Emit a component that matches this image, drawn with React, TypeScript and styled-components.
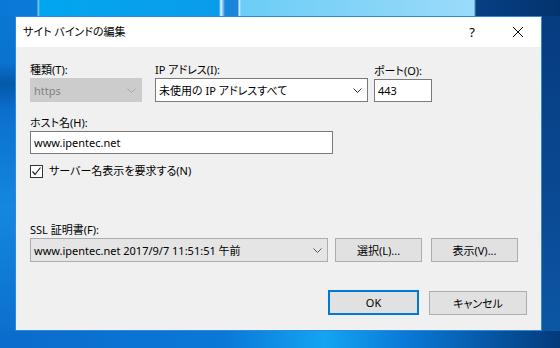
import React from "react";
import styled, { createGlobalStyle } from "styled-components";

const Global = createGlobalStyle`
  html, body { margin: 0; padding: 0; }
  body {
    width: 560px;
    height: 348px;
    overflow: hidden;
    font-family: "Noto Sans", "Noto Sans CJK JP", sans-serif;
    font-feature-settings: "palt";
  }
  * { box-sizing: border-box; }
`;

const Desktop = styled.div`
  width: 560px;
  height: 348px;
  padding: 16px 0 0 15px;
  background-color: #0a6fcf;
  background-image:
    linear-gradient(to right, #0a78d6 0px, #0a7ad8 37px, #7fd0f8 38px, #02a6f0 40px, #0a9ceb 219px, #e0f4ff 221px, #1a86da 225px, #1a86da 238px, #dff3ff 239px, #6ccdf6 241px, #9adbfa 474px, #063f82 476px, #03336f 560px),
    linear-gradient(to right, #0a6ccc 0%, #0a78d8 40%, #14a4f2 58%, #0a7ad8 72%, #043a7a 100%),
    linear-gradient(to bottom, #063a7e 0%, #0a4a94 60%, #0d58a6 100%),
    linear-gradient(to bottom, #0a78d6 0%, #0a72d0 18%, #0558a8 24%, #0a70ce 32%, #1587de 60%, #0a6ccc 100%);
  background-repeat: no-repeat;
  background-size: 100% 16px, 100% 17px, 18px 100%, 15px 100%;
  background-position: top left, bottom left, top right, top left;
`;

const Dialog = styled.div`
  width: 527px;
  height: 315px;
  border: 1px solid #2b8ae0;
  background: #f0f0f0;
  display: flex;
  flex-direction: column;
  color: #000;
  font-size: 11px;
`;

const TitleBar = styled.div`
  height: 30px;
  background: #fff;
  display: flex;
  align-items: center;
  padding-left: 7px;
`;

const Title = styled.div`
  flex: 1;
  font-size: 11px;
  line-height: 16px;
`;

const CaptionButton = styled.div`
  width: 46px;
  height: 30px;
  display: flex;
  align-items: center;
  justify-content: center;
  font-size: 13px;
  color: #000;
`;

const Body = styled.div`
  flex: 1;
  padding: 15px 14px 0 14px;
  display: flex;
  flex-direction: column;
`;

const Row = styled.div<{ $mt?: number; $end?: boolean }>`
  display: flex;
  align-items: flex-end;
  margin-top: ${(p) => p.$mt ?? 0}px;
  justify-content: ${(p) => (p.$end ? "flex-end" : "flex-start")};
`;

const Field = styled.div<{ $w: number; $mr?: number }>`
  width: ${(p) => p.$w}px;
  margin-right: ${(p) => p.$mr ?? 0}px;
  display: flex;
  flex-direction: column;
`;

const Label = styled.div`
  height: 16px;
  line-height: 16px;
  font-size: 11px;
  white-space: nowrap;
`;

const Combo = styled.div<{ $variant: "disabled" | "normal" | "readonly" }>`
  height: 24px;
  display: flex;
  align-items: center;
  padding: 0 5px 0 3px;
  font-size: 11px;
  white-space: nowrap;
  background: ${(p) =>
    p.$variant === "disabled" ? "#cccccc" : p.$variant === "readonly" ? "#e5e5e5" : "#ffffff"};
  border: 1px solid
    ${(p) =>
      p.$variant === "disabled" ? "#cccccc" : p.$variant === "readonly" ? "#adadad" : "#7a7a7a"};
  color: ${(p) => (p.$variant === "disabled" ? "#838383" : "#000")};
`;

const ComboText = styled.span`
  flex: 1;
  overflow: hidden;
`;

const TextBox = styled.div<{ $h?: number }>`
  height: ${(p) => p.$h ?? 23}px;
  display: flex;
  align-items: center;
  padding: 0 3px;
  background: #fff;
  border: 1px solid #7a7a7a;
  font-size: 11px;
  white-space: nowrap;
`;

const CheckRow = styled.div`
  display: flex;
  align-items: center;
  margin-top: 10px;
  height: 14px;
`;

const CheckBox = styled.div`
  width: 13px;
  height: 13px;
  border: 1px solid #333;
  background: #fff;
  display: flex;
  align-items: center;
  justify-content: center;
  margin-right: 6px;
`;

const CheckLabel = styled.span`
  font-size: 11px;
  line-height: 16px;
`;

const Button = styled.div<{ $w: number; $ml?: number; $default?: boolean }>`
  width: ${(p) => p.$w}px;
  height: ${(p) => (p.$default ? 25 : 24)}px;
  margin-left: ${(p) => p.$ml ?? 0}px;
  display: flex;
  align-items: center;
  justify-content: center;
  background: #e1e1e1;
  border: ${(p) => (p.$default ? "2px solid #0078d7" : "1px solid #adadad")};
  font-size: 11px;
  white-space: nowrap;
`;

const Chevron = ({ color }: { color: string }) => (
  <svg width="9" height="5" viewBox="0 0 9 5">
    <path d="M0.5 0.5 L4.5 4.5 L8.5 0.5" fill="none" stroke={color} strokeWidth="1" />
  </svg>
);

const CloseIcon = () => (
  <svg width="10" height="10" viewBox="0 0 10 10">
    <path d="M0 0 L10 10 M10 0 L0 10" stroke="#000" strokeWidth="1" />
  </svg>
);

const CheckMark = () => (
  <svg width="11" height="11" viewBox="0 0 11 11">
    <path d="M1.5 5.5 L4 8.5 L9.5 1.5" fill="none" stroke="#222" strokeWidth="1.2" />
  </svg>
);

export default function App() {
  return (
    <>
      <Global />
      <Desktop>
        <Dialog>
          <TitleBar>
            <Title>サイト バインドの編集</Title>
            <CaptionButton>?</CaptionButton>
            <CaptionButton>
              <CloseIcon />
            </CaptionButton>
          </TitleBar>
          <Body>
            <Row>
              <Field $w={112} $mr={13}>
                <Label>種類(T):</Label>
                <Combo $variant="disabled">
                  <ComboText>https</ComboText>
                  <Chevron color="#a6a6a6" />
                </Combo>
              </Field>
              <Field $w={213} $mr={6}>
                <Label>IP アドレス(I):</Label>
                <Combo $variant="normal">
                  <ComboText>未使用の IP アドレスすべて</ComboText>
                  <Chevron color="#333" />
                </Combo>
              </Field>
              <Field $w={58}>
                <Label>ポート(O):</Label>
                <TextBox>443</TextBox>
              </Field>
            </Row>
            <Row $mt={13}>
              <Field $w={303}>
                <Label>ホスト名(H):</Label>
                <TextBox>www.ipentec.net</TextBox>
              </Field>
            </Row>
            <CheckRow>
              <CheckBox>
                <CheckMark />
              </CheckBox>
              <CheckLabel>サーバー名表示を要求する(N)</CheckLabel>
            </CheckRow>
            <Row $mt={44}>
              <Field $w={298}>
                <Label>SSL 証明書(F):</Label>
                <Combo $variant="readonly">
                  <ComboText>www.ipentec.net 2017/9/7 11:51:51 午前</ComboText>
                  <Chevron color="#555" />
                </Combo>
              </Field>
              <Button $w={87} $ml={7}>選択(L)...</Button>
              <Button $w={87} $ml={9}>表示(V)...</Button>
            </Row>
            <Row $mt={28} $end>
              <Button $w={91} $default>OK</Button>
              <Button $w={98} $ml={10}>キャンセル</Button>
            </Row>
          </Body>
        </Dialog>
      </Desktop>
    </>
  );
}
